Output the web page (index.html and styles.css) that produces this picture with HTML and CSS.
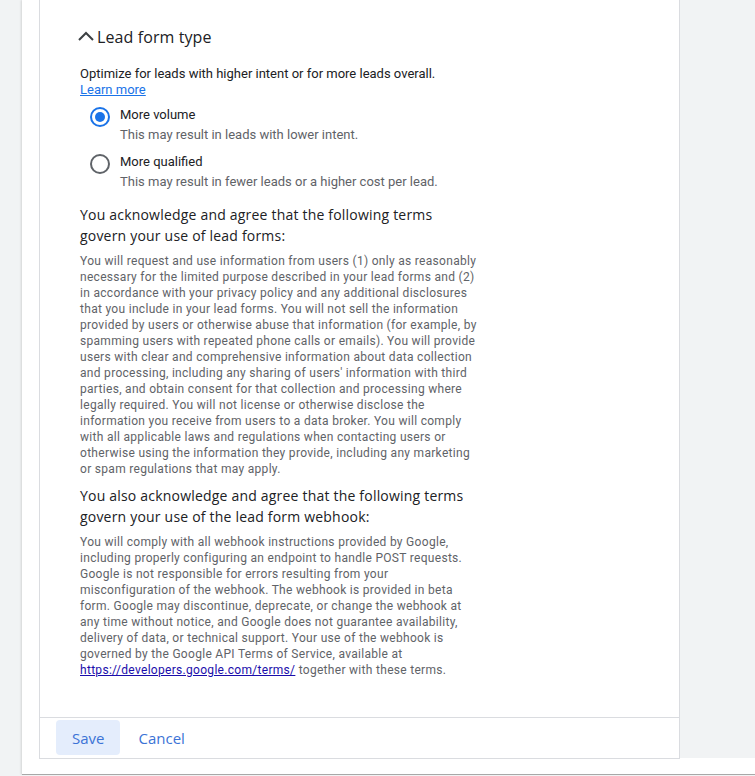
FILE: index.html
```html
<!DOCTYPE html>
<html lang="en">
<head>
    <meta charset="UTF-8">
    <meta name="viewport" content="width=device-width, initial-scale=1.0">
    <title>Lead form type</title>
    <link rel="stylesheet" href="styles.css">
</head>
<body>

<div class="page">
    <div class="card">
        <div class="card-body">
            <div class="section-title">
                <svg class="chevron" width="18" height="18" viewBox="0 0 18 18">
                    <path d="M2 13 L9 6 L16 13" fill="none" stroke="#3c4043" stroke-width="2"/>
                </svg>
                <span>Lead form type</span>
            </div>

            <p class="intro">Optimize for leads with higher intent or for more leads overall.<br>
                <a href="#" class="learn">Learn more</a></p>

            <div class="options">
                <label class="option">
                    <span class="radio checked"></span>
                    <span class="option-text">
                        <span class="option-label">More volume</span>
                        <span class="option-desc">This may result in leads with lower intent.</span>
                    </span>
                </label>
                <label class="option">
                    <span class="radio"></span>
                    <span class="option-text">
                        <span class="option-label">More qualified</span>
                        <span class="option-desc">This may result in fewer leads or a higher cost per lead.</span>
                    </span>
                </label>
            </div>

            <div class="terms">
                <h3>You acknowledge and agree that the following terms govern your use of lead forms:</h3>
                <p>You will request and use information from users (1) only as reasonably necessary for the limited purpose described in your lead forms and (2) in accordance with your privacy policy and any additional disclosures that you include in your lead forms. You will not sell the information provided by users or otherwise abuse that information (for example, by spamming users with repeated phone calls or emails). You will provide users with clear and comprehensive information about data collection and processing, including any sharing of users' information with third parties, and obtain consent for that collection and processing where legally required. You will not license or otherwise disclose the information you receive from users to a data broker. You will comply with all applicable laws and regulations when contacting users or otherwise using the information they provide, including any marketing or spam regulations that may apply.</p>

                <h3>You also acknowledge and agree that the following terms govern your use of the lead form webhook:</h3>
                <p>You will comply with all webhook instructions provided by Google, including properly configuring an endpoint to handle POST requests. Google is not responsible for errors resulting from your misconfiguration of the webhook. The webhook is provided in beta form. Google may discontinue, deprecate, or change the webhook at any time without notice, and Google does not guarantee availability, delivery of data, or technical support. Your use of the webhook is governed by the Google API Terms of Service, available at <a href="#" class="terms-link">https://developers.google.com/terms/</a> together with these terms.</p>
            </div>
        </div>

        <div class="card-footer">
            <button type="button" class="btn-save">Save</button>
            <button type="button" class="btn-cancel">Cancel</button>
        </div>
    </div>
    <div class="side"></div>
</div>

</body>
</html>
```

FILE: styles.css
```css
body {
    margin: 0;
    padding: 0;
    background-color: #f1f3f4;
    font-family: Roboto, 'Liberation Sans', Arial, sans-serif;
    color: #202124;
}

.page {
    margin-left: 22px;
    height: 775px;
    box-sizing: border-box;
    background-color: #fff;
    border-bottom: 1px solid #a8a8a8;
    box-shadow: -1px 0 2px rgba(0, 0, 0, 0.12);
    padding-left: 17px;
    display: flex;
    align-items: flex-start;
}

.card {
    width: 641px;
    height: 759px;
    box-sizing: border-box;
    border: 1px solid #dadce0;
    border-top: none;
    display: flex;
    flex-direction: column;
}

.card-body {
    flex: 1;
    padding: 24px 0 0 40px;
    overflow: hidden;
}

.side {
    flex: 1;
    height: 758px;
    background-color: #f1f3f4;
}

.section-title {
    display: flex;
    align-items: center;
    margin-left: -3px;
    font-family: 'Open Sans', Roboto, sans-serif;
    font-size: 16px;
    letter-spacing: 0.1px;
    color: #202124;
    height: 26px;
}

.chevron {
    margin-right: 2px;
    margin-top: -2px;
}

.intro {
    margin: 16px 0 0;
    font-size: 13px;
    line-height: 16px;
}

.learn {
    color: #1a73e8;
}

.options {
    margin: 7px 0 0 10px;
}

.option {
    display: flex;
    align-items: flex-start;
    margin-bottom: 7px;
}

.radio {
    width: 16px;
    height: 16px;
    border: 2px solid #5f6368;
    border-radius: 50%;
    margin-top: 2px;
    margin-right: 10px;
    position: relative;
    flex-shrink: 0;
}

.radio.checked {
    border-color: #1a73e8;
}

.radio.checked::after {
    content: "";
    position: absolute;
    left: 3px;
    top: 3px;
    width: 10px;
    height: 10px;
    border-radius: 50%;
    background-color: #1a73e8;
}

.option-text {
    display: flex;
    flex-direction: column;
    font-size: 13px;
    line-height: 20px;
}

.option-desc {
    color: #5f6368;
}

.terms {
    width: 400px;
    margin-top: 12px;
}

.terms h3 {
    margin: 0;
    font-family: 'Open Sans', Roboto, sans-serif;
    font-weight: 500;
    font-size: 14px;
    letter-spacing: 0.2px;
    line-height: 21px;
    color: #202124;
}

.terms p {
    margin: 7px 0 8px;
    font-size: 12px;
    letter-spacing: 0.3px;
    line-height: 16px;
    color: #5f6368;
}

.terms-link {
    color: #1a0dab;
}

.card-footer {
    border-top: 1px solid #dadce0;
    padding: 2px 16px 3px;
    display: flex;
    gap: 2px;
}

.card-footer button {
    font-family: 'Open Sans', Roboto, sans-serif;
    font-size: 15px;
    font-weight: 500;
    height: 35px;
    padding: 0 16px;
    border: none;
    border-radius: 4px;
    cursor: pointer;
    color: #3b73d6;
    background: none;
}

.btn-save {
    background-color: #e4edfc !important;
}
```
